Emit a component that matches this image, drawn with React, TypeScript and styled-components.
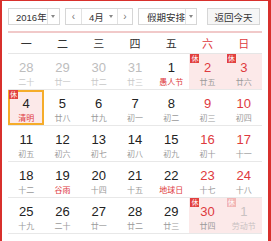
import React from "react";
import styled, { createGlobalStyle, css } from "styled-components";

const Global = createGlobalStyle`
  html, body { margin: 0; padding: 0; background: #fff; }
  body { font-family: "Liberation Sans", "Noto Sans CJK SC", sans-serif; }
`;

const RED = "#de3a3e";

const Frame = styled.div`
  width: 271px;
  height: 241px;
  box-sizing: border-box;
  border-top: 1px solid #d8302c;
  border-left: 2px solid #d8302c;
  border-right: 3px solid #d8302c;
  padding: 7px 6px 0 6px;
  background: #fff;
  overflow: hidden;
`;

const Toolbar = styled.div`
  display: flex;
  height: 17px;
`;

const Box = styled.div<{ $w: number; $gap: number; $bg?: string }>`
  display: flex;
  align-items: stretch;
  width: ${(p) => p.$w}px;
  margin-right: ${(p) => p.$gap}px;
  box-sizing: border-box;
  border: 1px solid #d6d6d6;
  background: ${(p) => p.$bg || "#fff"};
  font-family: "Liberation Sans", "Noto Sans CJK SC", sans-serif;
  font-size: 9.5px;
  color: #333;
`;

const Label = styled.div<{ $pad: number; $center?: boolean }>`
  flex: 1;
  display: flex;
  align-items: center;
  justify-content: ${(p) => (p.$center ? "center" : "flex-start")};
  padding-left: ${(p) => p.$pad}px;
  white-space: nowrap;
`;

const Arrow = styled.div<{ $w: number; $line?: boolean }>`
  width: ${(p) => p.$w}px;
  display: flex;
  align-items: center;
  justify-content: center;
  ${(p) => p.$line && css`border-left: 1px solid #e2e2e2;`}
  &::after {
    content: "";
    border-left: 2.5px solid transparent;
    border-right: 2.5px solid transparent;
    border-top: 3px solid #888;
  }
`;

const Nav = styled.div<{ $w: number; $side: "l" | "r" }>`
  width: ${(p) => p.$w}px;
  display: flex;
  align-items: center;
  justify-content: center;
  color: #777;
  font-size: 10px;
  ${(p) =>
    p.$side === "l"
      ? css`border-right: 1px solid #e2e2e2;`
      : css`border-left: 1px solid #e2e2e2;`}
`;

const Rule = styled.div`
  margin-top: 6px;
  height: 2px;
  background: #f1c9c9;
`;

const WeekHead = styled.div`
  display: grid;
  grid-template-columns: repeat(7, 1fr);
  height: 20px;
  border-bottom: 1px solid #e6e6e6;
  font-family: "Noto Sans CJK SC", sans-serif;
  font-size: 11px;
`;

const WeekName = styled.div<{ $red?: boolean }>`
  display: flex;
  align-items: center;
  justify-content: center;
  color: ${(p) => (p.$red ? RED : "#333")};
`;

const Row = styled.div`
  display: grid;
  grid-template-columns: repeat(7, 1fr);
  height: 35px;
  border-bottom: 1px solid #e8e8e8;
`;

type Kind = "norm" | "wk" | "out" | "faded";

const Cell = styled.div<{ $hol?: boolean; $today?: boolean }>`
  position: relative;
  display: flex;
  flex-direction: column;
  align-items: center;
  padding-top: 6px;
  box-sizing: border-box;
  background: ${(p) => (p.$hol ? "#fce9e9" : "transparent")};
  ${(p) => p.$today && css`box-shadow: inset 0 0 0 2px #f5ac2a;`}
`;

const Num = styled.div<{ $kind: Kind }>`
  font-family: "Liberation Sans", Arial, sans-serif;
  font-size: 13px;
  line-height: 16px;
  color: ${(p) =>
    p.$kind === "wk" ? RED : p.$kind === "out" ? "#bdbdbd" : p.$kind === "faded" ? "#c9c2c2" : "#222"};
`;

const Lunar = styled.div<{ $tone: "gray" | "red" | "out" | "faded" }>`
  font-family: "Noto Sans CJK SC", sans-serif;
  font-size: 8px;
  line-height: 9px;
  margin-top: 1px;
  white-space: nowrap;
  color: ${(p) =>
    p.$tone === "red" ? RED : p.$tone === "out" ? "#c8c8c8" : p.$tone === "faded" ? "#c9c2c2" : "#9a9a9a"};
`;

const Badge = styled.span<{ $faded?: boolean }>`
  position: absolute;
  top: 0;
  left: 1px;
  width: 9px;
  height: 9px;
  display: flex;
  align-items: center;
  justify-content: center;
  background: ${(p) => (p.$faded ? "#f2b6b6" : "#e2403f")};
  color: #fff;
  font-family: "Noto Sans CJK SC", sans-serif;
  font-size: 7px;
  line-height: 9px;
`;

type Day = {
  n: number;
  l: string;
  kind?: Kind;
  fest?: boolean;
  hol?: boolean;
  today?: boolean;
};

const weeks: Day[][] = [
  [
    { n: 28, l: "二十", kind: "out" },
    { n: 29, l: "廿一", kind: "out" },
    { n: 30, l: "廿二", kind: "out" },
    { n: 31, l: "廿三", kind: "out" },
    { n: 1, l: "愚人节", fest: true },
    { n: 2, l: "廿五", kind: "wk", hol: true },
    { n: 3, l: "廿六", kind: "wk", hol: true },
  ],
  [
    { n: 4, l: "清明", fest: true, hol: true, today: true },
    { n: 5, l: "廿八" },
    { n: 6, l: "廿九" },
    { n: 7, l: "初一" },
    { n: 8, l: "初二" },
    { n: 9, l: "初三", kind: "wk" },
    { n: 10, l: "初四", kind: "wk" },
  ],
  [
    { n: 11, l: "初五" },
    { n: 12, l: "初六" },
    { n: 13, l: "初七" },
    { n: 14, l: "初八" },
    { n: 15, l: "初九" },
    { n: 16, l: "初十", kind: "wk" },
    { n: 17, l: "十一", kind: "wk" },
  ],
  [
    { n: 18, l: "十二" },
    { n: 19, l: "谷雨", fest: true },
    { n: 20, l: "十四" },
    { n: 21, l: "十五" },
    { n: 22, l: "地球日", fest: true },
    { n: 23, l: "十七", kind: "wk" },
    { n: 24, l: "十八", kind: "wk" },
  ],
  [
    { n: 25, l: "十九" },
    { n: 26, l: "二十" },
    { n: 27, l: "廿一" },
    { n: 28, l: "廿二" },
    { n: 29, l: "廿三" },
    { n: 30, l: "廿四", kind: "wk", hol: true },
    { n: 1, l: "劳动节", kind: "faded", hol: true },
  ],
];

const names = ["一", "二", "三", "四", "五", "六", "日"];

export default function App() {
  return (
    <>
      <Global />
      <Frame>
        <Toolbar>
          <Box $w={52} $gap={5}>
            <Label $pad={7}>2016年</Label>
            <Arrow $w={13} $line />
          </Box>
          <Box $w={68} $gap={5}>
            <Nav $w={15} $side="l">&lsaquo;</Nav>
            <Label $pad={7}>4月</Label>
            <Arrow $w={12} />
            <Nav $w={14} $side="r">&rsaquo;</Nav>
          </Box>
          <Box $w={59} $gap={10}>
            <Label $pad={8}>假期安排</Label>
            <Arrow $w={12} $line />
          </Box>
          <Box $w={53} $gap={0} $bg="#f6f6f6">
            <Label $pad={0} $center>返回今天</Label>
          </Box>
        </Toolbar>
        <Rule />
        <WeekHead>
          {names.map((n, i) => (
            <WeekName key={n} $red={i >= 5}>{n}</WeekName>
          ))}
        </WeekHead>
        {weeks.map((w, wi) => (
          <Row key={wi}>
            {w.map((d, di) => {
              const kind = d.kind || "norm";
              const tone = d.fest && kind !== "faded" ? "red" : kind === "out" ? "out" : kind === "faded" ? "faded" : "gray";
              return (
                <Cell key={di} $hol={d.hol} $today={d.today}>
                  {d.hol && <Badge $faded={kind === "faded"}>休</Badge>}
                  <Num $kind={kind}>{d.n}</Num>
                  <Lunar $tone={tone}>{d.l}</Lunar>
                </Cell>
              );
            })}
          </Row>
        ))}
      </Frame>
    </>
  );
}
